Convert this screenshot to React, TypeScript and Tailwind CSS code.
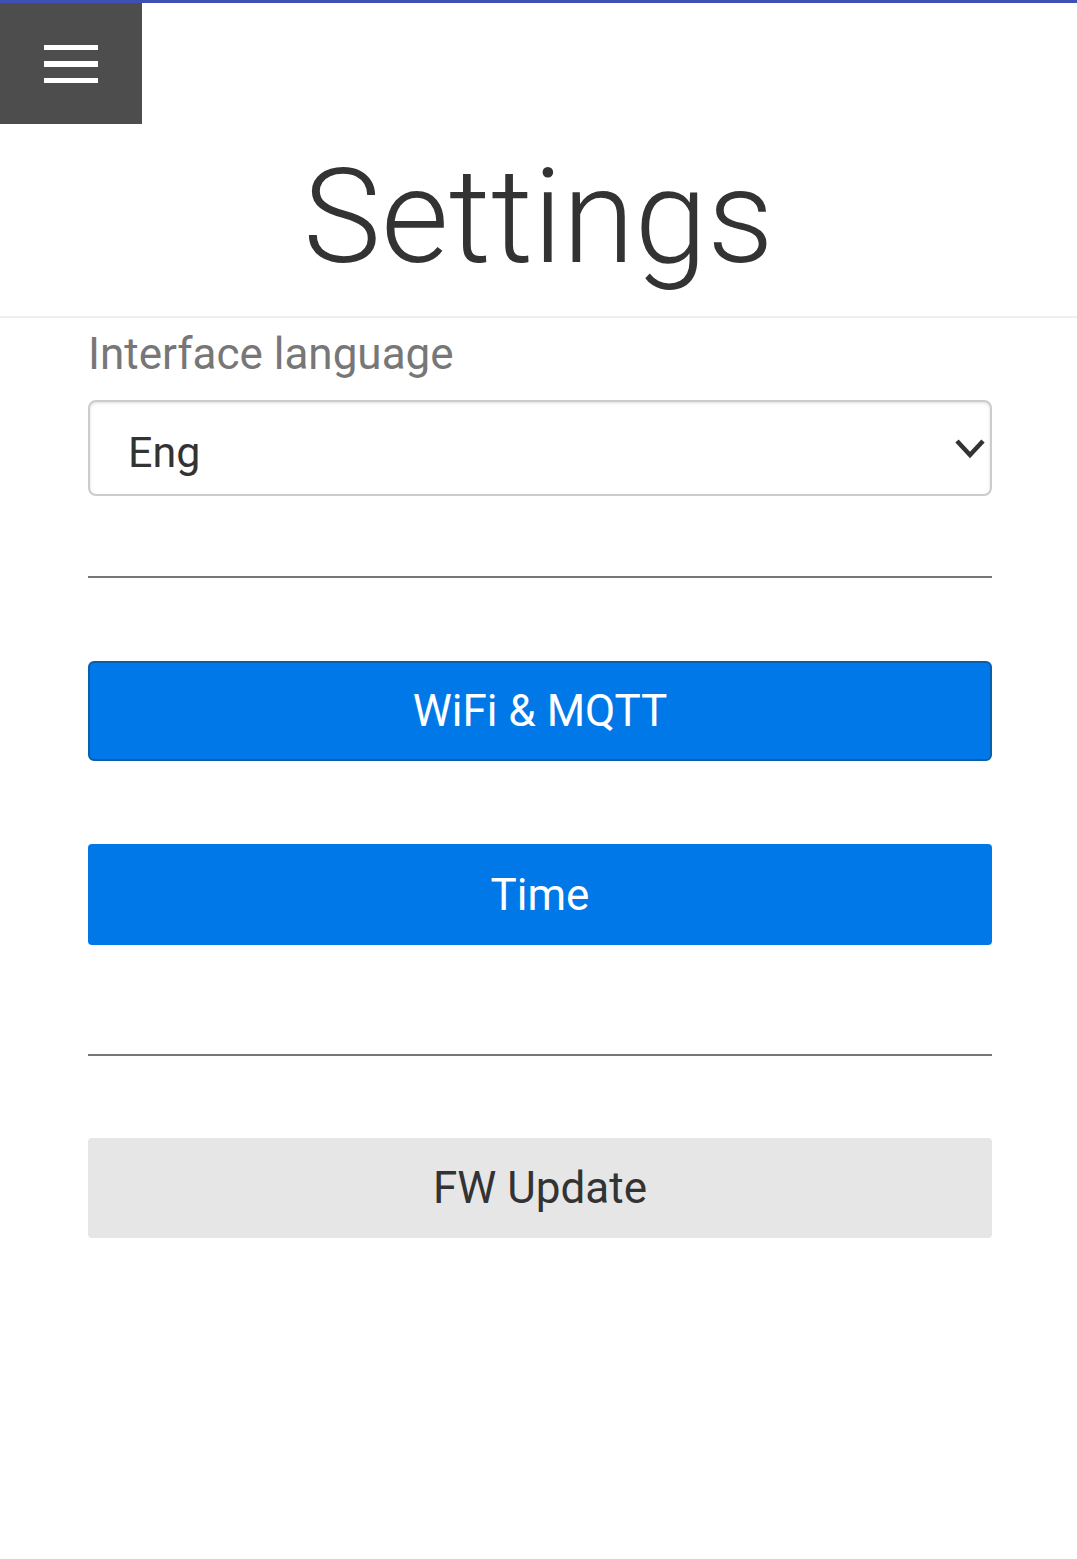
export default function App() {
  return (
    <div className="min-h-[1559px] w-full bg-white font-['Roboto',sans-serif]">
      {/* top accent bar */}
      <div className="h-[3px] w-full bg-[#3f4fb3]" />

      {/* menu toggle */}
      <div className="flex h-[121px] w-[142px] flex-col items-center justify-center gap-[11px] bg-[#4d4d4d]">
        <span className="block h-[5px] w-[54px] bg-white" />
        <span className="block h-[6px] w-[54px] bg-white" />
        <span className="block h-[5px] w-[54px] bg-white" />
      </div>

      {/* header */}
      <div className="flex h-[194px] items-start justify-center border-b-2 border-[#eee]">
        <h1 className="mt-[18px] text-[131px] leading-[150px] font-light text-[#333]">Settings</h1>
      </div>

      <div className="pl-[88px] pr-[85px]">
        <label className="block pt-[10px] text-[44px] leading-[52px] text-[#777]">Interface language</label>

        <div className="relative mt-[20px] flex h-[96px] items-center rounded-[8px] border-2 border-[#ccc] pl-[38px] pt-[8px] shadow-[inset_0_1px_3px_#ddd]">
          <span className="text-[43px] text-[#333]">Eng</span>
          <svg
            className="absolute right-[4px] top-[36px]"
            width="32"
            height="22"
            viewBox="0 0 32 22"
            fill="none"
            stroke="#333"
            strokeWidth="4.5"
          >
            <path d="M3 3l13 14L29 3" />
          </svg>
        </div>

        <hr className="mt-[80px] border-t-2 border-[#777]" />

        <button className="mt-[83px] flex h-[100px] w-full items-center justify-center rounded-[6px] border-2 border-[#0a5fad] bg-[#0078e7] text-[44px] text-white">
          WiFi &amp; MQTT
        </button>

        <button className="mt-[83px] flex h-[101px] w-full items-center justify-center rounded-[4px] bg-[#0078e7] text-[44px] text-white">
          Time
        </button>

        <hr className="mt-[109px] border-t-2 border-[#777]" />

        <button className="mt-[82px] flex h-[100px] w-full items-center justify-center rounded-[4px] bg-[#e6e6e6] text-[44px] text-[#333]">
          FW Update
        </button>
      </div>
    </div>
  );
}
